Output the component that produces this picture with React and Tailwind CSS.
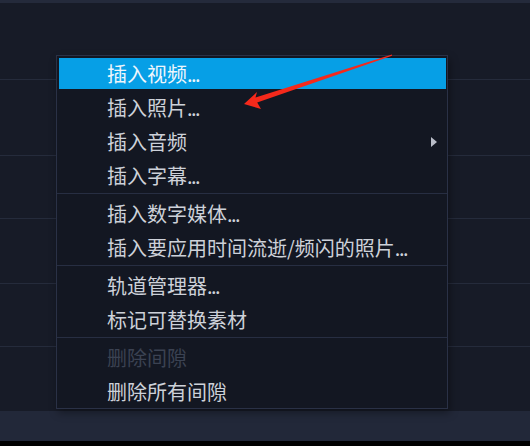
const items = [
  { label: '插入视频', dots: true, active: true },
  { label: '插入照片', dots: true },
  { label: '插入音频', submenu: true },
  { label: '插入字幕', dots: true },
  'sep',
  { label: '插入数字媒体', dots: true },
  { label: '插入要应用时间流逝/频闪的照片', dots: true },
  'sep',
  { label: '轨道管理器', dots: true },
  { label: '标记可替换素材' },
  'sep',
  { label: '删除间隙', disabled: true },
  { label: '删除所有间隙' },
];

function MenuItem({ item }) {
  return (
    <div className="h-[34px] pt-[2px] pb-[1px] pl-[2px] pr-[1px]">
      <div
        className={
          'relative flex h-full items-center pl-[48px] ' +
          (item.active ? 'bg-[#069fe6] text-[#eef6fc]' : item.disabled ? 'text-[#3b4252]' : 'text-[#cdd1d9]')
        }
      >
        <span className="leading-none">
          {item.label}
          {item.dots && <span className="tracking-[-1.5px]">...</span>}
        </span>
        {item.submenu && (
          <svg className="absolute right-[9px] top-1/2 -translate-y-1/2" width="6" height="10" viewBox="0 0 6 10">
            <path d="M0 0 L6 5 L0 10 Z" fill="#b9bdc8" />
          </svg>
        )}
      </div>
    </div>
  );
}

function ContextMenu() {
  return (
    <div className="absolute left-[56px] top-[55px] w-[392px] border border-[#2a3146] bg-[#131722] shadow-[2px_4px_8px_rgba(0,0,0,0.35)]">
      {items.map((item, i) =>
        item === 'sep' ? (
          <div key={i} className="py-[1px] pb-[2px]">
            <div className="h-px bg-[#272e42]" />
          </div>
        ) : (
          <MenuItem key={i} item={item} />
        )
      )}
    </div>
  );
}

export default function App() {
  return (
    <div
      className="relative h-[446px] w-[530px] overflow-hidden bg-[#171b27] text-[20px]"
      style={{ fontFamily: '"Noto Sans CJK SC", "Noto Sans", sans-serif' }}
    >
      {/* track rows behind the menu */}
      <div className="flex h-full flex-col">
        <div className="h-[3px] bg-[#242a3b]" />
        <div className="h-[77px] border-b border-[#252b3b]" />
        <div className="h-[76px] border-b border-[#252b3b]" />
        <div className="h-[63px] border-b border-[#252b3b]" />
        <div className="h-[65px] border-b border-[#252b3b]" />
        <div className="h-[63px] border-b border-[#252b3b]" />
        <div className="h-[64px]" />
        <div className="h-[30px] bg-[#222839]" />
        <div className="flex-1 bg-black" />
      </div>

      <ContextMenu />

      {/* red annotation arrow */}
      <svg className="pointer-events-none absolute left-0 top-0" width="530" height="446" viewBox="0 0 530 446">
        <polygon
          points="244,104 257,92 255.5,97.6 392,54.5 392,55.8 257.2,102.6 261,109"
          fill="#f5291b"
        />
      </svg>
    </div>
  );
}
